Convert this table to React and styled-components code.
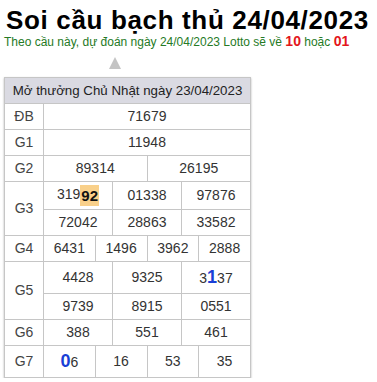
import styled, { createGlobalStyle } from 'styled-components';

const GlobalStyle = createGlobalStyle`
  body {
    margin: 0;
    background: #fff;
    font-family: "Liberation Sans", Arial, sans-serif;
  }
`;

const Page = styled.div`
  padding: 6px 4px 0;
`;

const Title = styled.h1`
  margin: 0;
  font-size: 26px;
  line-height: 28px;
  font-weight: bold;
  color: #000;
  letter-spacing: 0.65px;
  padding-left: 2px;
`;

const Lead = styled.p`
  margin: 0;
  font-size: 12px;
  line-height: 14px;
  color: #257a25;
`;

const Pick = styled.b`
  font-size: 14px;
  color: #e3161b;
`;

const Caret = styled.div`
  width: 0;
  height: 0;
  margin: 8px 0 8px 105px;
  border-left: 6px solid transparent;
  border-right: 6px solid transparent;
  border-bottom: 12px solid #c4c4c4;
`;

const Table = styled.table`
  width: 247px;
  table-layout: fixed;
  border-collapse: collapse;
  box-shadow: 0 1px 2px rgba(0, 0, 0, 0.3);
  font-size: 14px;
  color: #333;
`;

const Head = styled.th`
  background: #dadae2;
  border: 1px solid #c6c6c6;
  padding: 4px 2px;
  font-size: 13.3px;
  line-height: 17px;
  font-weight: normal;
  color: #222;
  white-space: nowrap;
`;

const Cell = styled.td`
  border: 1px solid #c6c6c6;
  padding: 4px 2px;
  line-height: 17px;
  text-align: center;
  white-space: nowrap;
  color: ${(p) => (p.$label ? '#444' : '#333')};
`;

const Tail = styled.span`
  display: inline-block;
  margin: -1px 0;
  padding: 2px 1px;
  background: #f9d08a;
  font-weight: bold;
  font-size: 15px;
  color: #111;
  vertical-align: middle;
`;

const Hit = styled.b`
  font-size: 18px;
  line-height: 23px;
  color: #1a3fd6;
`;

const draw = [
  { label: 'ĐB', lines: [['71679']] },
  { label: 'G1', lines: [['11948']] },
  { label: 'G2', lines: [['89314', '26195']] },
  {
    label: 'G3',
    lines: [
      [<>319<Tail>92</Tail></>, '01338', '97876'],
      ['72042', '28863', '33582'],
    ],
  },
  { label: 'G4', lines: [['6431', '1496', '3962', '2888']] },
  {
    label: 'G5',
    lines: [
      ['4428', '9325', <>3<Hit>1</Hit>37</>],
      ['9739', '8915', '0551'],
    ],
  },
  { label: 'G6', lines: [['388', '551', '461']] },
  { label: 'G7', lines: [[<><Hit>0</Hit>6</>, '16', '53', '35']] },
];

export default function App() {
  return (
    <Page>
      <GlobalStyle />
      <Title>Soi cầu bạch thủ 24/04/2023</Title>
      <Lead>
        Theo cầu này, dự đoán ngày 24/04/2023 Lotto sẽ về <Pick>10</Pick> hoặc <Pick>01</Pick>
      </Lead>
      <Caret />
      <Table>
        <colgroup>
          <col style={{ width: 39 }} />
          {Array.from({ length: 12 }, (_, i) => (
            <col key={i} />
          ))}
        </colgroup>
        <thead>
          <tr>
            <Head colSpan={13}>Mở thưởng Chủ Nhật ngày 23/04/2023</Head>
          </tr>
        </thead>
        <tbody>
          {draw.map((row) =>
            row.lines.map((line, li) => (
              <tr key={row.label + li}>
                {li === 0 && (
                  <Cell $label rowSpan={row.lines.length}>
                    {row.label}
                  </Cell>
                )}
                {line.map((v, i) => (
                  <Cell key={i} colSpan={12 / line.length}>
                    {v}
                  </Cell>
                ))}
              </tr>
            ))
          )}
        </tbody>
      </Table>
    </Page>
  );
}
